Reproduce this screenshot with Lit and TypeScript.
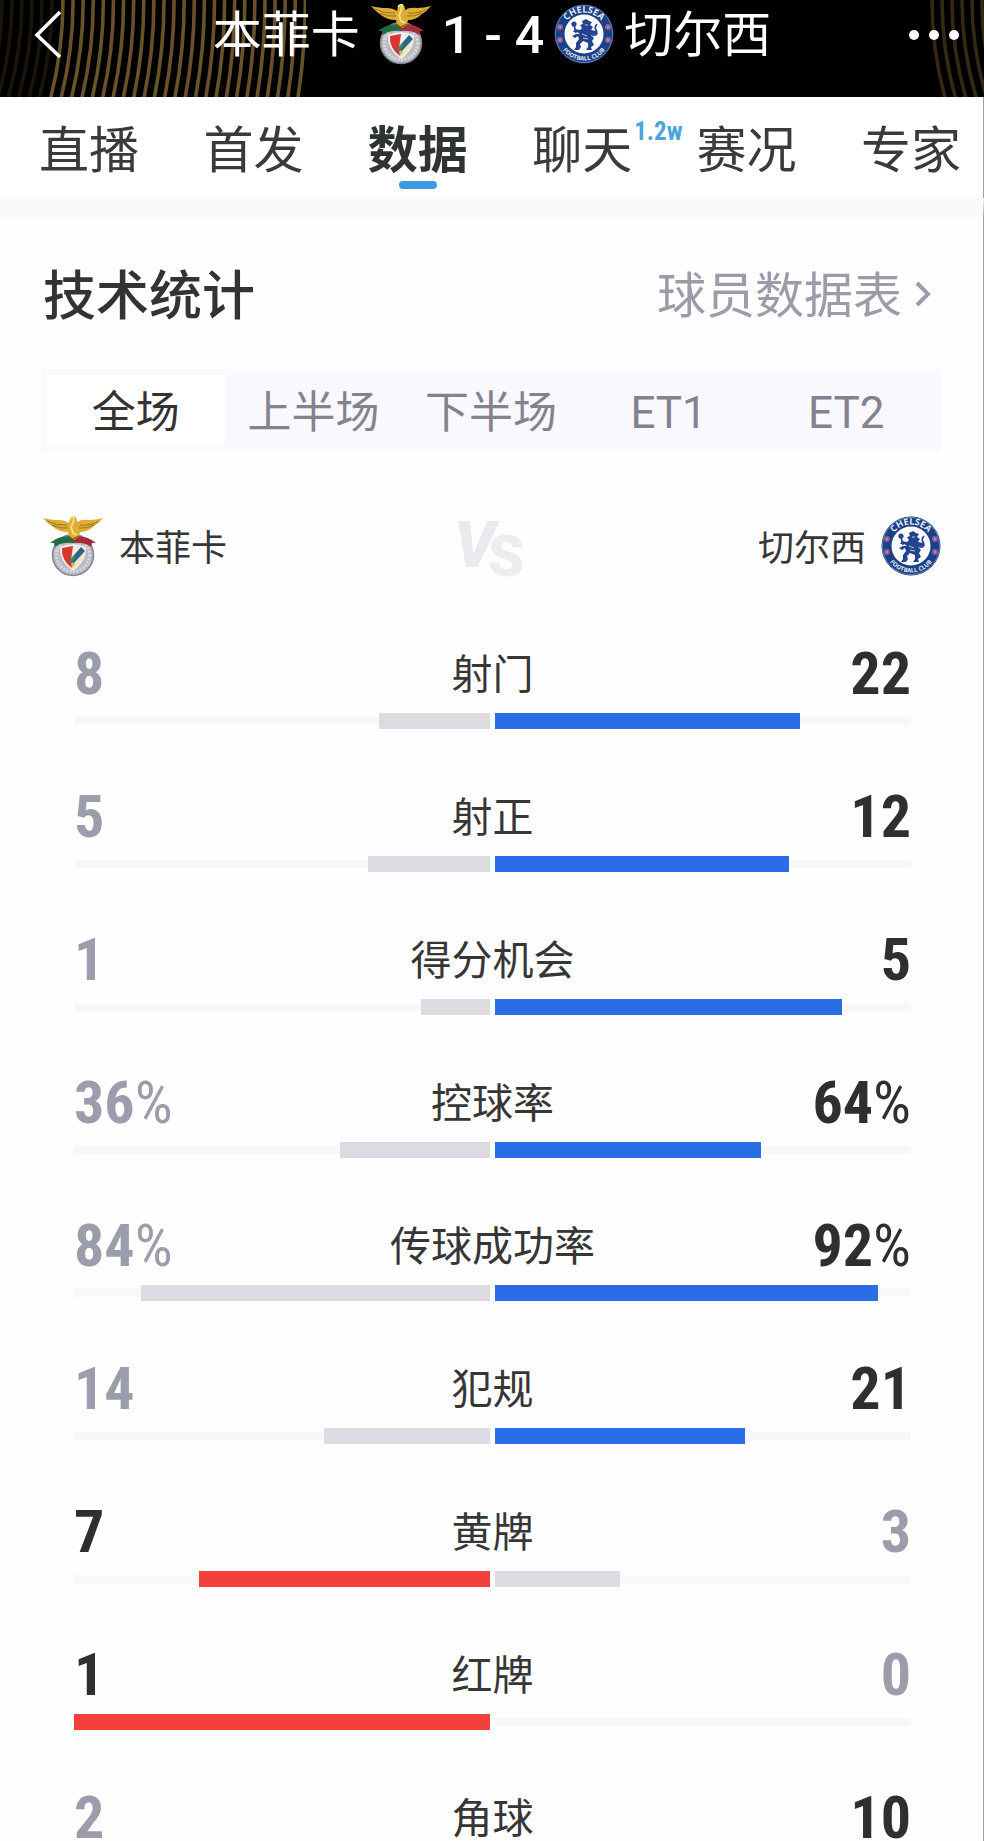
import { LitElement, html, css, svg } from "lit";
import { customElement, property, state } from "lit/decorators.js";
import { classMap } from "lit/directives/class-map.js";

interface Stat {
  label: string;
  home: number;
  away: number;
  percent?: boolean;
}

const STATS: Stat[] = [
  { label: "射门", home: 8, away: 22 },
  { label: "射正", home: 5, away: 12 },
  { label: "得分机会", home: 1, away: 5 },
  { label: "控球率", home: 36, away: 64, percent: true },
  { label: "传球成功率", home: 84, away: 92, percent: true },
  { label: "犯规", home: 14, away: 21 },
  { label: "黄牌", home: 7, away: 3 },
  { label: "红牌", home: 1, away: 0 },
  { label: "角球", home: 2, away: 10 },
];

const TABS = ["直播", "首发", "数据", "聊天", "赛况", "专家"];
const PERIODS = ["全场", "上半场", "下半场", "ET1", "ET2"];

@customElement("benfica-crest")
class BenficaCrest extends LitElement {
  static styles = css`
    :host { display: block; flex: none; width: 62px; height: 64px; }
    svg { display: block; width: 100%; height: 100%; }
  `;
  render() {
    return html`<svg viewBox="0 0 62 64" role="img" aria-label="本菲卡">
      <circle cx="31" cy="41" r="20.5" fill="#b9bac2" stroke="#85858f" stroke-width="1.5" />
      <circle cx="31" cy="41" r="16.5" fill="none" stroke="#d9d9df" stroke-width="3" stroke-dasharray="2 1.4" />
      <path d="M18 33 Q31 27 44 33 Q45 47 31 57 Q17 47 18 33Z" fill="#f1eee9" />
      <path d="M20 34 L31 32 L29 46 L30 54 Q19 46 20 34Z" fill="#d9352c" />
      <path d="M32 55 Q41 48 42 38 L31 48Z" fill="#ece4c4" />
      <path d="M27 47 L39 33 L43 37 L31 50Z" fill="#2c6285" />
      <path d="M27 47 L32 41 L34 43 L29 49Z" fill="#3f8a5a" />
      <path d="M30 48 L33 50 L30 54Z" fill="#d5b741" />
      <path d="M8 29 Q17 21 31 22 L31 29 Q20 28 13 33 L12 29Z" fill="#1f6b45" />
      <path d="M54 29 Q45 21 31 22 L31 29 Q42 28 49 33 L50 29Z" fill="#a52a3a" />
      <path d="M1 4 Q10 6 16 6 Q23 6 27 9 L28 5 Q29 2 32 2 Q35 3 35 8 Q39 5 47 6 Q54 6 61 4 Q57 9 52 12 Q46 18 38 18 L37 23 L32 26 L27 23 L26 18 Q17 18 11 13 Q6 10 1 4Z" fill="#dcae35" />
      <path d="M5 7 Q14 12 25 11 M10 11 Q17 15 26 14 M57 7 Q49 12 38 11 M52 11 Q45 15 37 14" fill="none" stroke="#9b721d" stroke-width="1" />
      <path d="M28 5 Q30 2 32 3 L31 9 L29 13 L31 19 L35 21" fill="none" stroke="#f5dc7d" stroke-width="2" />
      <path d="M26 22 L31 25 L37 22" fill="none" stroke="#7d5b17" stroke-width="1.3" />
    </svg>`;
  }
}

@customElement("chelsea-crest")
class ChelseaCrest extends LitElement {
  static styles = css`
    :host { display: block; flex: none; width: 60px; height: 60px; }
    svg { display: block; width: 100%; height: 100%; }
    .ring-text { font: 700 9px "Open Sans", "Liberation Sans", sans-serif; fill: #e4ecf2; }
    .ring-small { font-size: 6px; }
  `;
  render() {
    return html`<svg viewBox="0 0 60 60" role="img" aria-label="切尔西">
      <defs>
        <path id="top" d="M8.5 30 A21.5 21.5 0 0 1 51.5 30" />
        <path id="bottom" d="M3.5 30 A26.5 26.5 0 0 0 56.5 30" />
      </defs>
      <circle cx="30" cy="30" r="29.5" fill="#1c4088" />
      <circle cx="30" cy="30" r="28.6" fill="none" stroke="#5f82ad" stroke-width="1" />
      <circle cx="30" cy="30" r="19.5" fill="#fdfdff" />
      <text class="ring-text" text-anchor="middle"><textPath href="#top" startOffset="50%">CHELSEA</textPath></text>
      <text class="ring-text ring-small" text-anchor="middle"><textPath href="#bottom" startOffset="50%">FOOTBALL CLUB</textPath></text>
      ${[[6, 23], [6, 36], [54, 23], [54, 36]].map(
        ([x, y]) => svg`<circle cx=${x} cy=${y} r="3" fill="#8a5f9c" /><circle cx=${x} cy=${y} r="1.2" fill="#c77f9b" />`
      )}
      <path d="M28 17 L32 15 L35 17 L38 18 L36 21 L39 23 L37 26 L42 27 L42 30 L37 31 L40 34 L38 37 L40 41 L37 43 L38 46 L32 46 L34 43 L34 39 L29 37 L26 40 L27 43 L25 46 L20 46 L22 43 L22 39 L25 35 L24 32 L21 34 L18 32 L22 30 L26 30 L23 28 L19 28 L21 25 L26 26 L28 24 L26 21 L29 20Z" fill="#22438f" />
      <circle cx="20" cy="20" r="2.6" fill="#22438f" />
      <path d="M20 21 L22 29 M38 31 Q45 32 42 26 Q40 23 43 20" fill="none" stroke="#22438f" stroke-width="1.7" />
      <path d="M31 21 L34 21 M28 30 L33 32 M29 34 L34 35" stroke="#b9c8e6" stroke-width="1" />
    </svg>`;
  }
}

@customElement("stat-row")
class StatRow extends LitElement {
  @property({ attribute: false }) stat!: Stat;

  static styles = css`
    :host { display: block; }
    .line { display: grid; grid-template-columns: 1fr auto 1fr; grid-template-rows: 60px; align-items: center; }
    .label { padding-bottom: 2px; font-size: 41px; line-height: 60px; color: #363636; }
    .value {
      padding-top: 4px;
      font-family: "Roboto Condensed", "Liberation Sans Narrow", "DejaVu Sans Condensed", sans-serif;
      font-weight: 700; font-size: 60px; line-height: 60px; color: #9c9dac;
    }
    .unit { font-weight: 400; }
    .away { text-align: right; }
    .lead { color: #2e2f30; }
    .bars { display: grid; grid-template-columns: 1fr 1fr; gap: 5px; margin-top: 11px; }
    .track {
      display: flex; height: 16px;
      background: linear-gradient(#f8f6fb, #f8f6fb) center / 100% 8px no-repeat;
    }
    .track-home { justify-content: flex-end; }
    .bar { height: 16px; background: #dcdbe2; }
    .bar-home.win { background: #f3403a; }
    .bar-away.win { background: #296ee7; }
  `;

  render() {
    const { label, home, away, percent } = this.stat;
    const total = percent ? 100 : home + away;
    const unit = percent ? html`<span class="unit">%</span>` : "";
    return html`
      <div class="line">
        <span class=${classMap({ value: true, lead: home > away })}>${home}${unit}</span>
        <span class="label">${label}</span>
        <span class=${classMap({ value: true, away: true, lead: away > home })}>${away}${unit}</span>
      </div>
      <div class="bars">
        <div class="track track-home">
          <div class=${classMap({ bar: true, "bar-home": true, win: home > away })} style="width:${(home / total) * 100}%"></div>
        </div>
        <div class="track">
          <div class=${classMap({ bar: true, "bar-away": true, win: away > home })} style="width:${(away / total) * 100}%"></div>
        </div>
      </div>
    `;
  }
}

@customElement("app-root")
class AppRoot extends LitElement {
  @state() private tab = 2;
  @state() private period = 0;

  static styles = css`
    :host {
      display: flex; flex-direction: column; height: 100vh; overflow: hidden;
      background: #fefefe; color: #333;
      font-family: "Noto Sans CJK SC", sans-serif;
    }
    button { box-sizing: border-box; margin: 0; padding: 0; border: 0; background: none; font: inherit; color: inherit; cursor: pointer; }
    h1, h2 { margin: 0; font-weight: 400; }

    .header {
      position: relative; flex: none; display: flex; align-items: center; justify-content: space-between;
      box-sizing: border-box; height: 97px; padding: 0 24px 29px; background: #000; color: #fff; overflow: hidden;
    }
    .rays { position: absolute; top: 0; height: 97px; }
    .rays-left { left: 0; width: 306px; }
    .rays-right { right: 0; width: 70px; }
    .icon-button { position: relative; width: 52px; height: 68px; }
    .icon-button svg { display: block; width: 52px; height: 68px; }
    .match {
      position: relative; display: flex; align-items: center; gap: 10px; height: 68px;
      font-family: Roboto, "Noto Sans CJK SC", sans-serif; font-size: 49px; line-height: 64px;
    }
    .team, .score { padding-top: 4px; }
    .score { font-size: 52px; font-weight: 500; white-space: pre; }

    .tabs {
      flex: none; display: flex; justify-content: space-between; align-items: center;
      height: 101px; padding: 0 22px 0 39px; background: #fff; border-right: 1px solid #a0a0a0;
    }
    .tab { position: relative; height: 101px; padding-bottom: 3px; font-size: 50px; line-height: 98px; color: #3a3a3a; }
    .tab.active { font-weight: 700; color: #2f3333; }
    .tab.active::after {
      content: ""; position: absolute; left: 50%; bottom: 9px; width: 38px; height: 8px;
      margin-left: -19px; border-radius: 4px; background: #3b9ae0;
    }
    .count {
      position: absolute; left: 100%; top: 18px; margin-left: 2px;
      font: 700 25px/34px "Roboto Condensed", "Liberation Sans Narrow", sans-serif; color: #48a6da;
    }

    .content {
      flex: 1; min-height: 0; overflow-y: auto; scrollbar-width: none;
      border-right: 1px solid #a0a0a0; border-top: 20px solid #fbf9fc;
    }
    .section-head { display: flex; justify-content: space-between; align-items: center; padding: 44px 51px 0 43px; }
    .section-title { font-size: 53px; line-height: 60px; font-weight: 500; color: #333; }
    .more-link { display: flex; align-items: center; gap: 12px; font-size: 49px; line-height: 60px; color: #9d9ba8; text-decoration: none; }
    .more-link svg { width: 18px; height: 28px; margin-top: 4px; }

    .periods {
      display: grid; grid-template-columns: repeat(5, 1fr); margin: 47px 42px 0 41px; padding: 6px;
      background: #f9f8fd;
    }
    .period {
      height: 70px; padding-top: 6px; color: #85828f;
      font-family: Roboto, "Noto Sans CJK SC", sans-serif; font-size: 44px; line-height: 64px;
    }
    .period.active { background: #fff; color: #333; }

    .teams { display: grid; grid-template-columns: 1fr auto 1fr; align-items: center; margin: 63px 42px 0 42px; }
    .side { display: flex; align-items: center; gap: 15px; font-size: 36px; line-height: 60px; color: #363636; }
    .side-away { justify-content: flex-end; }
    .side-name { padding-bottom: 2px; }
    .vs { width: 68px; height: 64px; overflow: visible; }
    .vs-letter { font: italic 900 64px Roboto, "Liberation Sans", sans-serif; fill: #ebe9ed; }
    .vs-small { font-size: 58px; font-style: normal; fill: #f0ebf0; }

    .stats { display: flex; flex-direction: column; gap: 56px; margin: 0; padding: 64px 72px 56px 74px; list-style: none; }
  `;

  private rays(cx: number, from: number, to: number, step: number) {
    const radii: number[] = [];
    for (let r = from; r <= to; r += step) radii.push(r);
    return radii.map((r, i) => svg`<circle cx=${cx} cy="0" r=${r} fill="none"
      stroke=${i % 2 ? "#6a4f2a" : "#665427"} stroke-width="3.6" />`);
  }

  render() {
    return html`
      <header class="header">
        <svg class="rays rays-left" viewBox="0 0 306 97" aria-hidden="true">
          <g opacity="0.25">${this.rays(-330, 332, 384, 10)}</g>
          ${this.rays(-330, 393, 636, 10.1)}
        </svg>
        <svg class="rays rays-right" viewBox="0 0 70 97" aria-hidden="true">
          <g opacity="0.5">${this.rays(390, 322, 372, 10)}</g>
        </svg>
        <button class="icon-button" aria-label="返回">
          <svg viewBox="0 0 52 68"><path d="M36 12 L13 35 L36 57" fill="none" stroke="#fff" stroke-width="3.6" /></svg>
        </button>
        <h1 class="match">
          <span class="team">本菲卡</span>
          <benfica-crest></benfica-crest>
          <span class="score">1 - 4</span>
          <chelsea-crest></chelsea-crest>
          <span class="team">切尔西</span>
        </h1>
        <button class="icon-button" aria-label="更多">
          <svg viewBox="0 0 52 68" fill="#fff">
            <circle cx="6" cy="35" r="5" /><circle cx="26" cy="35" r="5" /><circle cx="46" cy="35" r="5" />
          </svg>
        </button>
      </header>

      <nav class="tabs">
        ${TABS.map((name, i) => html`
          <button class=${classMap({ tab: true, active: i === this.tab })} @click=${() => (this.tab = i)}>
            ${name}${name === "聊天" ? html`<span class="count">1.2w</span>` : ""}
          </button>`)}
      </nav>

      <main class="content">
        <div class="section-head">
          <h2 class="section-title">技术统计</h2>
          <a class="more-link" href="#players">球员数据表
            <svg viewBox="0 0 18 28" aria-hidden="true"><path d="M3 3 L14 14 L3 25" fill="none" stroke="#9d9ba8" stroke-width="4" /></svg>
          </a>
        </div>

        <div class="periods">
          ${PERIODS.map((name, i) => html`
            <button class=${classMap({ period: true, active: i === this.period })} @click=${() => (this.period = i)}>${name}</button>`)}
        </div>

        <div class="teams">
          <div class="side"><benfica-crest></benfica-crest><span class="side-name">本菲卡</span></div>
          <svg class="vs" viewBox="0 0 68 64" role="img" aria-label="VS">
            <text class="vs-letter" x="-4" y="53">V<tspan class="vs-small" dx="-7" dy="9">S</tspan></text>
          </svg>
          <div class="side side-away"><span class="side-name">切尔西</span><chelsea-crest></chelsea-crest></div>
        </div>

        <ul class="stats">
          ${STATS.map((stat) => html`<li><stat-row .stat=${stat}></stat-row></li>`)}
        </ul>
      </main>
    `;
  }
}
